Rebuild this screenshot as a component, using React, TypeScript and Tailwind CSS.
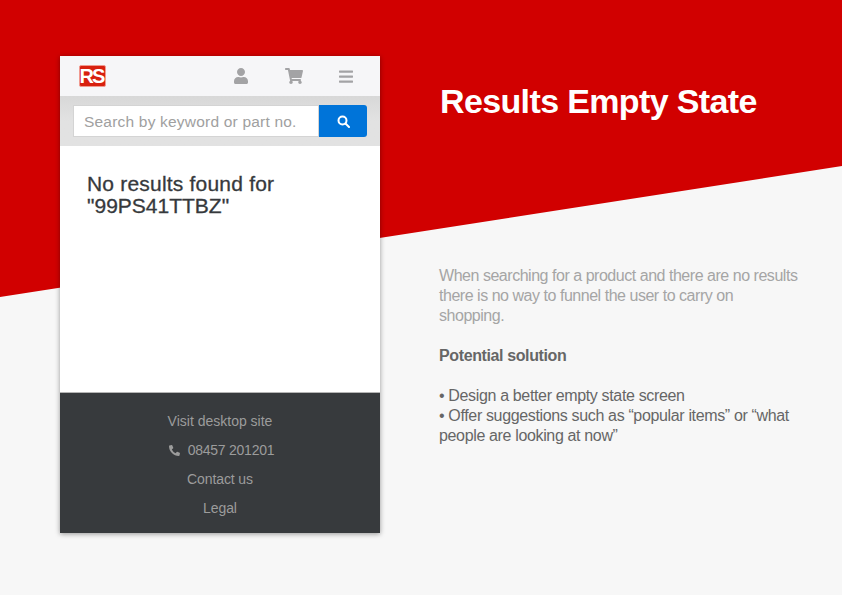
import React from 'react';
import { FaUser, FaShoppingCart, FaBars, FaPhoneAlt } from 'react-icons/fa';

const footerLinks = ['Contact us', 'Legal'];

const App = () => {
  return (
    <div className="relative w-[842px] h-[595px] overflow-hidden bg-[#f7f7f7] font-['Liberation_Sans',Arial,sans-serif]">
      {/* red slanted backdrop */}
      <div className="absolute inset-0 bg-[#d10000] [clip-path:polygon(0_0,842px_0,842px_166px,0_297px)]"></div>

      <div className="relative flex pl-[60px] pt-[56px]">
        {/* phone */}
        <div className="w-[320px] h-[477px] flex flex-col bg-white shadow-[0_1px_5px_rgba(0,0,0,0.4)]">
          <div className="h-[40px] flex items-center bg-[#f6f6f8] pl-[19px]">
            <div className="w-[27px] h-[22px] flex items-center justify-center bg-[#d8200f] rounded-[2px] border border-[#f09a90]">
              <span className="text-white font-bold text-[20px] leading-none tracking-[-2px] -ml-[2px]">RS</span>
            </div>
            <FaUser className="ml-[128px] w-[14px] h-[16px] text-[#a3a3a5]" />
            <FaShoppingCart className="ml-[37px] w-[18px] h-[16px] text-[#a3a3a5]" />
            <FaBars className="ml-[36px] w-[14px] h-[17px] text-[#a3a3a5]" />
          </div>

          <div className="h-[50px] flex items-center pl-[13px] bg-gradient-to-b from-[#d8d8d8] via-[#e2e2e2] to-[#e2e2e2]">
            <div className="w-[246px] h-[32px] flex items-center bg-white border border-[#d4d4d4] pl-[10px]">
              <span className="text-[15.5px] leading-[20px] mt-[1px] tracking-[0.2px] text-[#a0a0a0] whitespace-nowrap">Search by keyword or part no.</span>
            </div>
            <div className="w-[48px] h-[32px] flex items-center justify-center bg-[#0074d9] rounded-r-[3px]">
              <svg width="13" height="13" viewBox="0 0 13 13" fill="none" stroke="white" strokeWidth="2">
                <circle cx="5.5" cy="5.5" r="4" />
                <path d="M8.5 8.5l3.5 3.5" strokeLinecap="round" />
              </svg>
            </div>
          </div>

          <div className="h-[247px] pl-[27px] pt-[27px] border-b border-[#b5b5b5]">
            <p className="text-[21px] leading-[22px] text-[#36393c] tracking-[0.2px] [-webkit-text-stroke:0.3px_#36393c]">
              No results found for
              <br />
              <span className="tracking-[0px]">"99PS41TTBZ"</span>
            </p>
          </div>

          <div className="h-[140px] flex flex-col items-center pt-[19px] gap-[10px] bg-[#373a3d] text-[14px] leading-[19px] text-[#9c9c9c]">
            <span>Visit desktop site</span>
            <span className="flex items-center gap-[8px] tracking-[-0.25px] ml-[3px]">
              <FaPhoneAlt className="w-[11px] h-[11px]" />
              08457 201201
            </span>
            {footerLinks.map((link) => (
              <span key={link} className="tracking-[-0.1px]">{link}</span>
            ))}
          </div>
        </div>

        {/* notes */}
        <div className="w-[365px] ml-[59px]">
          <h1 className="mt-[23px] ml-[1px] text-[34px] leading-[44px] font-bold text-white tracking-[-0.63px]">Results Empty State</h1>
          <p className="mt-[143px] text-[16px] leading-[20px] tracking-[-0.47px] text-[#a5a5a5]">
            When searching for a product and there are no results
            <br />
            there is no way to funnel the user to carry on
            <br />
            shopping.
          </p>
          <p className="mt-[20px] text-[16px] leading-[20px] font-bold tracking-[-0.38px] text-[#666666]">Potential solution</p>
          <p className="mt-[20px] text-[16px] leading-[20px] tracking-[-0.35px] text-[#666666]">
            • Design a better empty state screen
            <br />
            • Offer suggestions such as “popular items” or “what people are looking at now”
          </p>
        </div>
      </div>
    </div>
  );
};

export default App;
